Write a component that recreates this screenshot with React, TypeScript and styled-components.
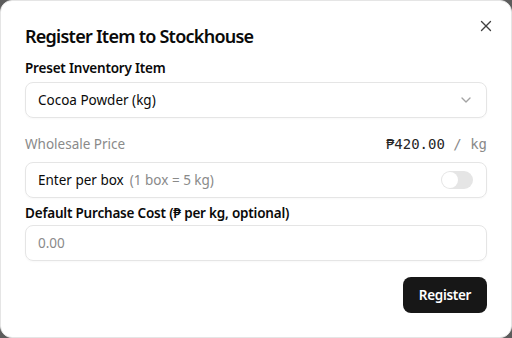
import React from "react";
import styled, { createGlobalStyle } from "styled-components";
import { ChevronDown, X } from "lucide-react";

const Global = createGlobalStyle`
  html, body { margin: 0; padding: 0; }
  body {
    background: #5c5c5c;
    font-family: "Noto Sans", "Open Sans", sans-serif;
    color: #0a0a0a;
    width: 512px;
    height: 338px;
    overflow: hidden;
  }
`;

const Dialog = styled.div`
  position: relative;
  box-sizing: border-box;
  width: 512px;
  height: 338px;
  background: #fff;
  border: 1px solid #e5e5e5;
  border-radius: 12px;
  padding: 21px 24px 24px 24px;
  display: flex;
  flex-direction: column;
`;

const Close = styled.button`
  position: absolute;
  top: 16px;
  right: 16px;
  width: 18px;
  height: 18px;
  padding: 0;
  border: none;
  background: none;
  color: #404040;
  display: flex;
  align-items: center;
  justify-content: center;
`;

const Title = styled.h2`
  margin: 0;
  font-size: 18px;
  line-height: 28px;
  font-weight: 600;
  letter-spacing: -0.75px;
`;

const Label = styled.div<{ $mt: number }>`
  margin-top: ${(p) => p.$mt}px;
  font-size: 13.5px;
  line-height: 20px;
  font-weight: 600;
  letter-spacing: -0.2px;
`;

const Field = styled.div<{ $mt: number; $h: number }>`
  margin-top: ${(p) => p.$mt}px;
  height: ${(p) => p.$h}px;
  box-sizing: border-box;
  border: 1px solid #e5e5e5;
  border-radius: 8px;
  padding: 0 12px;
  display: flex;
  align-items: center;
  justify-content: space-between;
  font-size: 13.5px;
  box-shadow: 0 1px 2px rgba(0,0,0,0.03);
`;

const Value = styled.span`
  color: #0a0a0a;
`;

const Placeholder = styled.span`
  color: #8a8a8a;
`;

const Muted = styled.span`
  color: #8a8a8a;
  margin-left: 6px;
`;

const PriceRow = styled.div`
  margin-top: 16px;
  height: 20px;
  display: flex;
  align-items: center;
  justify-content: space-between;
  font-size: 13.5px;
  color: #8a8a8a;
`;

const Mono = styled.span`
  font-family: "DejaVu Sans Mono", "Liberation Mono", monospace;
  font-size: 14px;
  color: #262626;
`;

const MonoMuted = styled.span`
  color: #8a8a8a;
`;

const Switch = styled.div`
  width: 32px;
  height: 18px;
  border-radius: 9px;
  background: #e5e5e5;
  margin-right: 1px;
  display: flex;
  align-items: center;
  padding: 1px;
  box-sizing: border-box;
`;

const Thumb = styled.div`
  width: 16px;
  height: 16px;
  border-radius: 50%;
  background: #fff;
`;

const Footer = styled.div`
  margin-top: 16px;
  display: flex;
  justify-content: flex-end;
`;

const Button = styled.button`
  height: 36px;
  width: 84px;
  padding: 0;
  border: none;
  border-radius: 8px;
  background: #171717;
  color: #fff;
  font-family: inherit;
  font-size: 13.5px;
  font-weight: 600;
  letter-spacing: -0.3px;
`;

export default function App() {
  return (
    <>
      <Global />
      <Dialog>
        <Close aria-label="Close">
          <X size={18} strokeWidth={1.8} />
        </Close>
        <Title>Register Item to Stockhouse</Title>
        <Label $mt={8}>Preset Inventory Item</Label>
        <Field $mt={4} $h={36}>
          <Value>Cocoa Powder (kg)</Value>
          <ChevronDown size={16} color="#a3a3a3" />
        </Field>
        <PriceRow>
          <span>Wholesale Price</span>
          <Mono>
            ₱420.00 <MonoMuted>/ kg</MonoMuted>
          </Mono>
        </PriceRow>
        <Field $mt={8} $h={37}>
          <span>
            <Value>Enter per box</Value>
            <Muted>(1 box = 5 kg)</Muted>
          </span>
          <Switch>
            <Thumb />
          </Switch>
        </Field>
        <Label $mt={5}>Default Purchase Cost (₱ per kg, optional)</Label>
        <Field $mt={2} $h={36}>
          <Placeholder>0.00</Placeholder>
        </Field>
        <Footer>
          <Button>Register</Button>
        </Footer>
      </Dialog>
    </>
  );
}
